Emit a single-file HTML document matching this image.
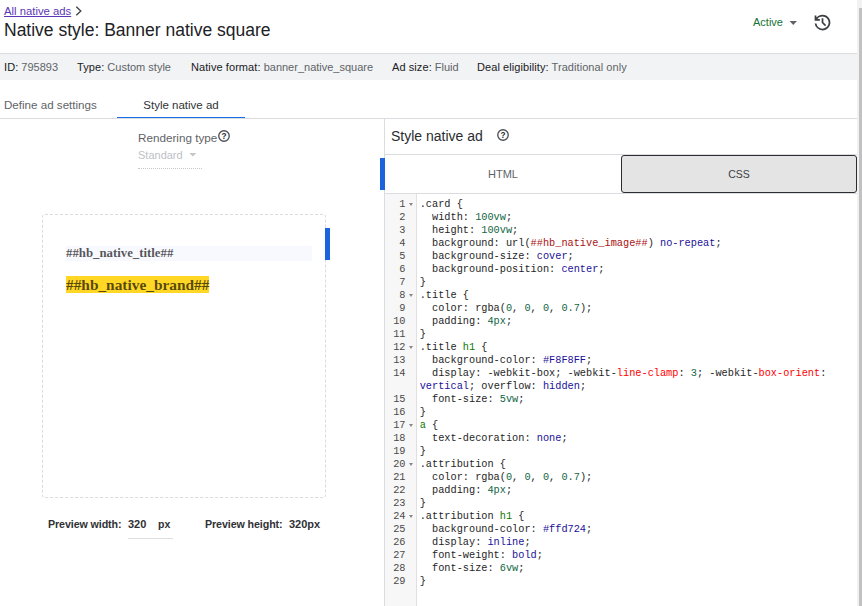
<!DOCTYPE html>
<html lang="en"><head><meta charset="utf-8"><title>Native style: Banner native square</title>
<style>
*{box-sizing:border-box;margin:0;padding:0}
html,body{width:862px;height:606px;overflow:hidden;background:#fff}
body{position:relative;font-family:"Liberation Sans",Arial,sans-serif;color:#202124;font-size:12px}
.abs{position:absolute;white-space:nowrap}
a.bc{color:#5b36b5;text-decoration:underline;font-size:11.3px}
.title{left:4px;top:18.6px;font-size:17.5px;line-height:22px;color:#202124}
.infobar{left:0;top:53px;width:857px;height:27px;background:#f1f3f4;border-top:1px solid #dadce0}
.info{top:61px;font-size:11px;line-height:13px;color:#5f6368}
.info b{font-weight:normal;color:#202124;letter-spacing:0.08px}
.tab{top:98px;font-size:11.6px;line-height:14px;color:#5f6368}
.hline{background:#dadce0;height:1px}
.vline{background:#dadce0;width:1px}
.blue{background:#1a65dc}
.code{left:385px;top:194px;width:472px;height:412px;background:#fff;font-family:"Liberation Mono","DejaVu Sans Mono",monospace;font-size:10.27px;line-height:13px;color:#262626}
.gutter{left:385px;top:194px;width:32px;height:412px;background:#f7f7f7;border-right:1px solid #e0e0e0}
.ln{position:relative;padding-left:34.7px;white-space:pre;min-height:13px}
.no{position:absolute;left:0;top:0;width:20.5px;text-align:right;color:#4a4a4a}
.fd{position:absolute;left:23.5px;top:5px;width:0;height:0;border-left:2.5px solid transparent;border-right:2.5px solid transparent;border-top:3px solid #888}
.cd{display:block}
.cn{color:#116644}.cr{color:#aa1111}.ck{color:#221199}.ce{color:#ff0000}.ct{color:#117700}
.pv{top:518px;font-size:11px;line-height:13px;font-weight:bold;color:#303134}
.serif{font-family:"Liberation Serif","Times New Roman",serif;font-weight:bold;color:rgba(0,0,0,0.68)}
</style></head><body>

<a class="abs bc" style="left:4px;top:4px;line-height:14px">All native ads</a>
<svg class="abs" style="left:74.600px;top:6px" width="8" height="10" viewBox="0 0 8 10"><path d="M1.3 0.8 L5.8 5 L1.3 9.200" fill="none" stroke="#3c4043" stroke-width="1.3"/></svg>
<div class="abs title">Native style: Banner native square</div>

<div class="abs" style="left:753px;top:15px;font-size:11px;line-height:14px;color:#137333">Active</div>
<svg class="abs" style="left:789px;top:20px" width="10" height="6" viewBox="0 0 10 6"><path d="M0.500 1 H8 L4.250 5 Z" fill="#5f6368"/></svg>
<svg class="abs" style="left:811.7px;top:11.600px" width="21" height="21" viewBox="0 -960 960 960"><path fill="#3c4043" d="M480-120q-138 0-240.500-91.500T122-440h82q14 104 92.500 172T480-200q117 0 198.500-81.500T760-480q0-117-81.500-198.500T480-760q-69 0-129 32t-101 88h110v80H120v-240h80v94q51-64 124.500-99T480-840q75 0 140.500 28.500t114 77q48.500 48.500 77 114T840-480q0 75-28.500 140.500t-77 114q-48.500 48.500-114 77T480-120Zm112-192L440-464v-216h80v184l128 128-56 56Z"/></svg>

<div class="abs infobar"></div>
<div class="abs info" style="left:4px"><b>ID:</b> 795893</div>
<div class="abs info" style="left:77px"><b>Type:</b> Custom style</div>
<div class="abs info" style="left:191px"><b>Native format:</b> banner_native_square</div>
<div class="abs info" style="left:392px"><b>Ad size:</b> Fluid</div>
<div class="abs info" style="left:477px;letter-spacing:0.06px"><b>Deal eligibility:</b> Traditional only</div>

<div class="abs tab" style="left:4px">Define ad settings</div>
<div class="abs tab" style="left:143.3px;color:#303336;font-size:11.5px">Style native ad</div>
<div class="abs hline" style="left:0;top:118px;width:857px"></div>
<div class="abs" style="left:117px;top:116.600px;width:128px;height:1.400px;background:#1a6fe6"></div>

<div class="abs" style="left:138px;top:131px;font-size:11.7px;line-height:14px;color:#5f6368">Rendering type</div>
<svg class="abs" style="left:217.1px;top:129.2px" width="14" height="14" viewBox="0 0 14 14"><circle cx="7" cy="7" r="5.250" fill="none" stroke="#4d5156" stroke-width="1.350"/><text x="7" y="9.900" font-size="8.200" font-weight="bold" text-anchor="middle" fill="#26292c" font-family="Liberation Sans, sans-serif">?</text></svg>
<div class="abs" style="left:138px;top:149px;font-size:11px;line-height:13px;color:#bdc1c6">Standard</div>
<svg class="abs" style="left:189px;top:152px" width="9" height="6" viewBox="0 0 9 6"><path d="M0.300 1 H7.400 L3.850 4.600 Z" fill="#c4c7ca"/></svg>
<div class="abs" style="left:138px;top:168px;width:64px;height:0;border-top:1px dotted #c4c7cb"></div>

<div class="abs" style="left:42px;top:214px;width:284px;height:284px;border:1px dashed #d8dbdf;border-radius:3px"></div>
<div class="abs blue" style="left:325px;top:228px;width:5px;height:32px"></div>
<div class="abs" style="left:66px;top:246px;width:246px;height:15px;background:#f8f8ff"></div>
<div class="abs serif" style="left:66px;top:246px;font-size:12.800px;line-height:15px">##hb_native_title##</div>
<div class="abs serif" style="left:66px;top:276px;font-size:15.360px;line-height:17px;background:#ffd724;height:17px">##hb_native_brand##</div>

<div class="abs pv" style="left:48px;font-size:10.7px;letter-spacing:-0.1px">Preview width:</div>
<div class="abs pv" style="left:128px">320</div>
<div class="abs pv" style="left:158px;font-size:10.5px">px</div>
<div class="abs hline" style="left:128px;top:538px;width:45px;background:#e0e0e0"></div>
<div class="abs pv" style="left:205px;font-size:10.7px;letter-spacing:-0.1px">Preview height:</div>
<div class="abs pv" style="left:289px">320px</div>

<div class="abs vline" style="left:384px;top:118px;height:488px"></div>
<div class="abs" style="left:391px;top:127px;font-size:14px;line-height:18px;color:#2a2c30">Style native ad</div>
<svg class="abs" style="left:496.1px;top:127.500px" width="14" height="14" viewBox="0 0 14 14"><circle cx="7" cy="7" r="5.250" fill="none" stroke="#4d5156" stroke-width="1.350"/><text x="7" y="9.900" font-size="8.200" font-weight="bold" text-anchor="middle" fill="#26292c" font-family="Liberation Sans, sans-serif">?</text></svg>
<div class="abs hline" style="left:385px;top:154px;width:472px"></div>
<div class="abs blue" style="left:380px;top:158px;width:5px;height:32px"></div>
<div class="abs" style="left:385px;top:167px;width:236px;text-align:center;font-size:11px;line-height:14px;color:#5f6368">HTML</div>
<div class="abs" style="left:621px;top:154.500px;width:236px;height:38.500px;background:#e4e4e4;border:1.200px solid #2b2d30;border-radius:3px;text-align:center;font-size:10.5px;line-height:36px;color:#3c4043;z-index:2">CSS</div>
<div class="abs hline" style="left:385px;top:193px;width:472px"></div>

<div class="abs code"><div class="abs gutter" style="left:0;top:0"></div>
<div style="position:relative;padding-top:4px">
<div class="ln"><span class="no">1<i class="fd"></i></span><span class="cd">.card {</span></div>
<div class="ln"><span class="no">2</span><span class="cd">  width: <span class="cn">100vw</span>;</span></div>
<div class="ln"><span class="no">3</span><span class="cd">  height: <span class="cn">100vw</span>;</span></div>
<div class="ln"><span class="no">4</span><span class="cd">  background: url(<span class="cr">##hb_native_image##</span>) <span class="ck">no-repeat</span>;</span></div>
<div class="ln"><span class="no">5</span><span class="cd">  background-size: <span class="ck">cover</span>;</span></div>
<div class="ln"><span class="no">6</span><span class="cd">  background-position: <span class="ck">center</span>;</span></div>
<div class="ln"><span class="no">7</span><span class="cd">}</span></div>
<div class="ln"><span class="no">8<i class="fd"></i></span><span class="cd">.title {</span></div>
<div class="ln"><span class="no">9</span><span class="cd">  color: rgba(<span class="cn">0</span>, <span class="cn">0</span>, <span class="cn">0</span>, <span class="cn">0.7</span>);</span></div>
<div class="ln"><span class="no">10</span><span class="cd">  padding: <span class="cn">4px</span>;</span></div>
<div class="ln"><span class="no">11</span><span class="cd">}</span></div>
<div class="ln"><span class="no">12<i class="fd"></i></span><span class="cd">.title <span class="ct">h1</span> {</span></div>
<div class="ln"><span class="no">13</span><span class="cd">  background-color: <span class="ck">#F8F8FF</span>;</span></div>
<div class="ln"><span class="no">14</span><span class="cd">  display: -webkit-box; -webkit-<span class="ce">line-clamp</span>: <span class="cn">3</span>; -webkit-<span class="ce">box-orient</span>:<br><span class="ck">vertical</span>; overflow: <span class="ck">hidden</span>;</span></div>
<div class="ln"><span class="no">15</span><span class="cd">  font-size: <span class="cn">5vw</span>;</span></div>
<div class="ln"><span class="no">16</span><span class="cd">}</span></div>
<div class="ln"><span class="no">17<i class="fd"></i></span><span class="cd"><span class="ct">a</span> {</span></div>
<div class="ln"><span class="no">18</span><span class="cd">  text-decoration: <span class="ck">none</span>;</span></div>
<div class="ln"><span class="no">19</span><span class="cd">}</span></div>
<div class="ln"><span class="no">20<i class="fd"></i></span><span class="cd">.attribution {</span></div>
<div class="ln"><span class="no">21</span><span class="cd">  color: rgba(<span class="cn">0</span>, <span class="cn">0</span>, <span class="cn">0</span>, <span class="cn">0.7</span>);</span></div>
<div class="ln"><span class="no">22</span><span class="cd">  padding: <span class="cn">4px</span>;</span></div>
<div class="ln"><span class="no">23</span><span class="cd">}</span></div>
<div class="ln"><span class="no">24<i class="fd"></i></span><span class="cd">.attribution <span class="ct">h1</span> {</span></div>
<div class="ln"><span class="no">25</span><span class="cd">  background-color: <span class="ck">#ffd724</span>;</span></div>
<div class="ln"><span class="no">26</span><span class="cd">  display: <span class="ck">inline</span>;</span></div>
<div class="ln"><span class="no">27</span><span class="cd">  font-weight: <span class="ck">bold</span>;</span></div>
<div class="ln"><span class="no">28</span><span class="cd">  font-size: <span class="cn">6vw</span>;</span></div>
<div class="ln"><span class="no">29</span><span class="cd">}</span></div>
</div></div>

<div class="abs" style="left:857px;top:0;width:5px;height:606px;background:#f1f1f1"></div>
<div class="abs" style="left:859px;top:8px;width:3px;height:598px;background:#c1c1c1"></div>
</body></html>
